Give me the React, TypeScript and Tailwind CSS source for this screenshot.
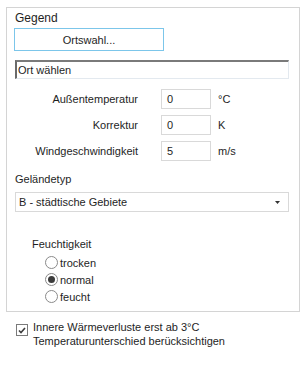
import { useState } from 'react';

const font = { fontFamily: '"Liberation Sans", Arial, sans-serif' };

function NumberRow({ label, value, unit }: { label: string; value: string; unit: string }) {
  return (
    <div className="flex items-center h-[20px]">
      <span className="w-[124px] text-right text-[11px] leading-[14px]">{label}</span>
      <div className="ml-[23px] w-[50px] h-[20px] border border-[#d9d9d9] bg-white text-[11px] leading-[14px] pl-[5px] pt-[2px]">
        {value}
      </div>
      <span className="ml-[7px] text-[11px] leading-[14px]">{unit}</span>
    </div>
  );
}

function Radio({ label, checked, onClick }: { label: string; checked: boolean; onClick: () => void }) {
  return (
    <div className="flex items-center h-[17px] cursor-default" onClick={onClick}>
      <span className="w-[13px] h-[13px] rounded-full border border-[#8a8a8a] bg-white flex items-center justify-center">
        {checked && <span className="w-[7px] h-[7px] rounded-full bg-[#3c3c3c]" />}
      </span>
      <span className="ml-[2px] text-[11px] leading-[14px]">{label}</span>
    </div>
  );
}

export default function App() {
  const [humidity, setHumidity] = useState('normal');

  return (
    <div className="w-[304px] h-[367px] bg-white text-[#1e1e1e] pt-[7px] pl-[6px]" style={font}>
      {/* Gegend panel */}
      <div className="w-[294px] h-[305px] border border-[#d4d4d4] pl-[8px] pt-[2px]">
        <div className="text-[12px] leading-[16px]">Gegend</div>

        <button className="mt-[2px] -ml-px w-[150px] h-[23px] border border-[#7cc6ea] bg-white text-[11px] leading-[14px] text-center">
          Ortswahl...
        </button>

        <div className="mt-[9px] w-[274px] h-[19px] border-t-2 border-l-2 border-r border-b border-t-[#7a7a7a] border-l-[#6a6a6a] border-r-[#e3e9ef] border-b-[#e3e9ef] text-[11px] leading-[14px] pl-[1px] pt-[1px]">
          Ort wählen
        </div>

        <div className="mt-[10px] flex flex-col gap-[6px] -ml-px">
          <NumberRow label="Außentemperatur" value="0" unit="°C" />
          <NumberRow label="Korrektur" value="0" unit="K" />
          <NumberRow label="Windgeschwindigkeit" value="5" unit="m/s" />
        </div>

        <div className="mt-[11px] text-[11px] leading-[14px]">Geländetyp</div>

        <div className="mt-[6px] w-[274px] h-[20px] border border-[#d9d9d9] flex items-center justify-between pl-[3px] pr-[8px]">
          <span className="text-[11px] leading-[14px]">B - städtische Gebiete</span>
          <svg width="5" height="3" viewBox="0 0 5 3">
            <path d="M0 0h5L2.5 3z" fill="#333" />
          </svg>
        </div>

        <div className="mt-[25px] ml-[17px] text-[11px] leading-[14px]">Feuchtigkeit</div>
        <div className="mt-[3px] ml-[30px] flex flex-col">
          {['trocken', 'normal', 'feucht'].map((h) => (
            <Radio key={h} label={h} checked={humidity === h} onClick={() => setHumidity(h)} />
          ))}
        </div>
      </div>

      {/* Checkbox */}
      <div className="mt-[8px] ml-[10px] flex items-start">
        <span className="mt-[4px] w-[12px] h-[12px] border border-[#7a7a7a] bg-white flex items-center justify-center">
          <svg width="8" height="7" viewBox="0 0 8 7">
            <path d="M1 3.5 3 5.5 7 1" stroke="#3c3c3c" strokeWidth="1.6" fill="none" />
          </svg>
        </span>
        <span className="ml-[5px] text-[11px] leading-[14px]">
          Innere Wärmeverluste erst ab 3°C
          <br />
          Temperaturunterschied berücksichtigen
        </span>
      </div>
    </div>
  );
}
